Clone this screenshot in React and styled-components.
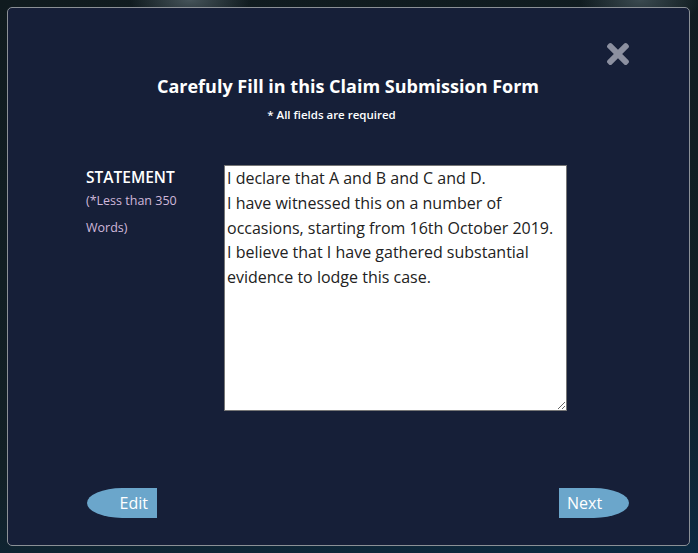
import React from "react";
import styled, { createGlobalStyle } from "styled-components";
import { FaTimes } from "react-icons/fa";

const GlobalStyle = createGlobalStyle`
  html, body {
    margin: 0;
    padding: 0;
  }
  body {
    font-family: "Open Sans", "Liberation Sans", sans-serif;
    background: #0f1a1e;
  }
`;

const Backdrop = styled.div`
  width: 698px;
  height: 553px;
  box-sizing: border-box;
  padding: 7px 8px 7px 7px;
  background:
    radial-gradient(ellipse 60px 26px at 190px 0px, #46545a 0%, rgba(70, 84, 90, 0) 100%),
    radial-gradient(ellipse 60px 30px at 640px 0px, #3b4a50 0%, rgba(59, 74, 80, 0) 100%),
    linear-gradient(170deg, #101b1f 0%, #122026 70%, #0b2a42 100%);
`;

const Modal = styled.div`
  position: relative;
  height: 100%;
  box-sizing: border-box;
  border: 1px solid #8b9096;
  border-radius: 5px;
  background: #161f38;
  padding: 66px 60px 0 79px;
  display: flex;
  flex-direction: column;
  color: #ffffff;
`;

const CloseButton = styled.button`
  position: absolute;
  top: 30px;
  right: 55px;
  background: none;
  border: none;
  padding: 0;
  color: #8c90a0;
  display: flex;
  cursor: pointer;
`;

const Title = styled.h2`
  margin: 0 0 0 -20px;
  font-size: 18px;
  font-weight: 700;
  line-height: 24px;
  text-align: center;
`;

const Subtitle = styled.p`
  margin: 9px 0 0 -20px;
  padding-right: 33px;
  font-size: 11.5px;
  font-weight: 600;
  line-height: 16px;
  text-align: center;
`;

const FieldRow = styled.div`
  display: flex;
  margin-top: 42px;
`;

const LabelColumn = styled.div`
  width: 138px;
  margin-left: -1px;
  padding-top: 2px;
`;

const FieldLabel = styled.div`
  font-size: 15.5px;
  font-weight: 600;
  line-height: 20px;
`;

const FieldHint = styled.div`
  font-size: 12.5px;
  line-height: 27px;
  color: #d0b8da;
  width: 100px;
`;

const Statement = styled.textarea`
  width: 343px;
  height: 246px;
  box-sizing: border-box;
  border: 1px solid #767676;
  border-radius: 0;
  padding: 0 2px;
  font-family: "Open Sans", "Liberation Sans", sans-serif;
  font-size: 16px;
  line-height: 24.75px;
  color: #222222;
  background: #ffffff;
  resize: both;
`;

const ButtonRow = styled.div`
  display: flex;
  justify-content: space-between;
  margin-top: 77px;
`;

const PillButton = styled.button`
  width: 70px;
  height: 30px;
  border: none;
  background: #6ba6cb;
  color: #ffffff;
  font-family: "Open Sans", "Liberation Sans", sans-serif;
  font-size: 16px;
  display: flex;
  align-items: center;
  justify-content: ${(p) => (p.$side === "left" ? "flex-end" : "flex-start")};
  padding: ${(p) => (p.$side === "left" ? "0 9px 0 0" : "0 0 0 8px")};
  border-radius: ${(p) => (p.$side === "left" ? "50% 0 0 50%" : "0 50% 50% 0")};
  cursor: pointer;
`;

const statementText = `I declare that A and B and C and D.
I have witnessed this on a number of occasions, starting from 16th October 2019.
I believe that I have gathered substantial evidence to lodge this case.`;

const App = () => {
  return (
    <>
      <GlobalStyle />
      <Backdrop>
        <Modal>
          <CloseButton aria-label="Close">
            <FaTimes size={32} />
          </CloseButton>
          <Title>Carefuly Fill in this Claim Submission Form</Title>
          <Subtitle>* All fields are required</Subtitle>

          <FieldRow>
            <LabelColumn>
              <FieldLabel>STATEMENT</FieldLabel>
              <FieldHint>(*Less than 350 Words)</FieldHint>
            </LabelColumn>
            <Statement defaultValue={statementText} />
          </FieldRow>

          <ButtonRow>
            <PillButton $side="left">Edit</PillButton>
            <PillButton $side="right">Next</PillButton>
          </ButtonRow>
        </Modal>
      </Backdrop>
    </>
  );
};

export default App;
